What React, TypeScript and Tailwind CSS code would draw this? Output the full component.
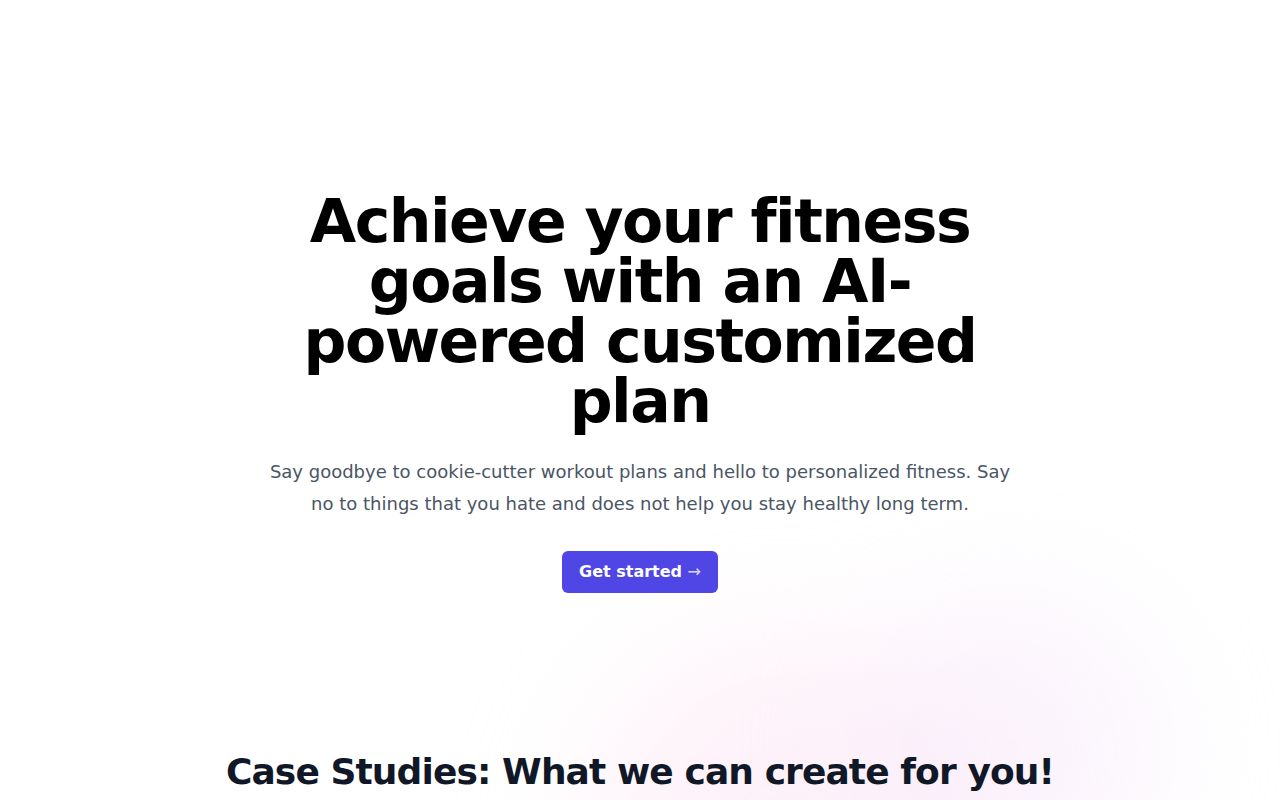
import * as React from "react";

export default function App() {
  return (
    <div
      className="relative min-h-screen overflow-hidden bg-white"
      style={{ fontFamily: '"DejaVu Sans", sans-serif' }}
    >
      {/* Decorative blob behind content */}
      <div aria-hidden="true" className="pointer-events-none absolute inset-0">
        <div className="absolute left-[590px] top-[640px] h-[380px] w-[400px] rounded-full bg-[#fce4f3] opacity-50 blur-3xl" />
        <div className="absolute left-[860px] top-[600px] h-[300px] w-[300px] rounded-full bg-[#f7e8fa] opacity-50 blur-3xl" />
      </div>

      <main className="relative px-6 pt-[191px]">
        <div className="mx-auto max-w-3xl text-center">
          <h1 className="text-6xl font-bold leading-none tracking-tight text-black">
            Achieve your fitness goals with an AI-powered customized plan
          </h1>
          <p className="mt-[25px] text-lg leading-8 text-gray-600">
            Say goodbye to cookie-cutter workout plans and hello to personalized fitness. Say no to
            things that you hate and does not help you stay healthy long term.
          </p>
          <div className="mt-[31px] flex justify-center">
            <a
              href="#"
              className="rounded-md bg-[#4f46e5] px-[17px] py-[9px] text-base font-bold leading-6 text-white"
            >
              Get started <span className="font-normal text-white/80">→</span>
            </a>
          </div>
        </div>

        <h2 className="mt-[159px] text-center text-4xl font-bold tracking-tight text-gray-900">
          Case Studies: What we can create for you!
        </h2>
      </main>
    </div>
  );
}
